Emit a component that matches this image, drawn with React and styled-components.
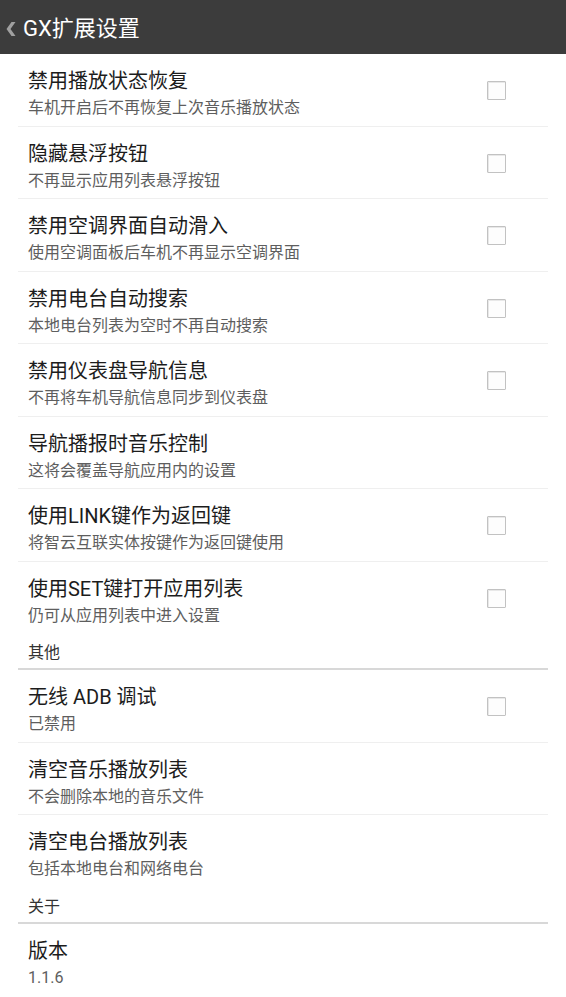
import styled, { createGlobalStyle } from "styled-components";

const GlobalStyle = createGlobalStyle`
  body {
    margin: 0;
    background: #ffffff;
    font-family: Roboto, "Noto Sans CJK SC", "Noto Sans", sans-serif;
  }
`;

const Page = styled.div`
  width: 566px;
  display: flex;
  flex-direction: column;
`;

const Header = styled.div`
  height: 54px;
  box-sizing: border-box;
  padding: 3px 0 0 6px;
  background: #3c3c3c;
  display: flex;
  align-items: center;
  gap: 7px;
`;

const Back = styled.svg`
  width: 10px;
  height: 14px;
  flex-shrink: 0;
`;

const HeaderTitle = styled.h1`
  margin: 0;
  font-size: 22px;
  font-weight: 400;
  color: #ffffff;
  line-height: 1;
`;

const Row = styled.div`
  margin: 0 18px;
  padding: 13px 42px 0 10px;
  height: 72.5px;
  box-sizing: border-box;
  display: flex;
  align-items: flex-start;
  justify-content: space-between;
  border-bottom: ${(p) => (p.$last ? "none" : "1px solid #efefef")};
`;

const Texts = styled.div`
  display: flex;
  flex-direction: column;
`;

const Title = styled.div`
  font-size: 20px;
  line-height: 28px;
  color: #1c1c1c;
`;

const Summary = styled.div`
  margin-top: 1px;
  font-size: 16px;
  line-height: 24px;
  color: #5e5e5e;
`;

const Check = styled.div`
  width: 19px;
  height: 19px;
  box-sizing: border-box;
  border: 1.5px solid #c2c2c2;
  border-radius: 1px;
  box-shadow: inset 1px 1px 0 #e8e8e8;
  background: #fdfdfd;
  margin-top: 14px;
`;

const Section = styled.div`
  margin: 0 18px;
  padding: 8px 10px 5px;
  height: 36px;
  box-sizing: border-box;
  border-bottom: 2px solid #d8d8d8;
  font-size: 16px;
  line-height: 21px;
  color: #333333;
`;

const groups = [
  {
    items: [
      { t: "禁用播放状态恢复", s: "车机开启后不再恢复上次音乐播放状态", c: true },
      { t: "隐藏悬浮按钮", s: "不再显示应用列表悬浮按钮", c: true },
      { t: "禁用空调界面自动滑入", s: "使用空调面板后车机不再显示空调界面", c: true },
      { t: "禁用电台自动搜索", s: "本地电台列表为空时不再自动搜索", c: true },
      { t: "禁用仪表盘导航信息", s: "不再将车机导航信息同步到仪表盘", c: true },
      { t: "导航播报时音乐控制", s: "这将会覆盖导航应用内的设置", c: false },
      { t: "使用LINK键作为返回键", s: "将智云互联实体按键作为返回键使用", c: true },
      { t: "使用SET键打开应用列表", s: "仍可从应用列表中进入设置", c: true },
    ],
  },
  {
    name: "其他",
    items: [
      { t: "无线 ADB 调试", s: "已禁用", c: true },
      { t: "清空音乐播放列表", s: "不会删除本地的音乐文件", c: false },
      { t: "清空电台播放列表", s: "包括本地电台和网络电台", c: false },
    ],
  },
  {
    name: "关于",
    items: [{ t: "版本", s: "1.1.6", c: false }],
  },
];

export default function App() {
  return (
    <Page>
      <GlobalStyle />
      <Header>
        <Back viewBox="0 0 10 14">
          <polygon points="5.5,0 9.5,0 4.5,7 9.5,14 5.5,14 0.5,7" fill="#a0a0a0" />
        </Back>
        <HeaderTitle>GX扩展设置</HeaderTitle>
      </Header>
      {groups.map((g, gi) => (
        <div key={gi}>
          {g.name && <Section>{g.name}</Section>}
          {g.items.map((it, i) => (
            <Row key={it.t} $last={i === g.items.length - 1}>
              <Texts>
                <Title>{it.t}</Title>
                <Summary>{it.s}</Summary>
              </Texts>
              {it.c && <Check />}
            </Row>
          ))}
        </div>
      ))}
    </Page>
  );
}
